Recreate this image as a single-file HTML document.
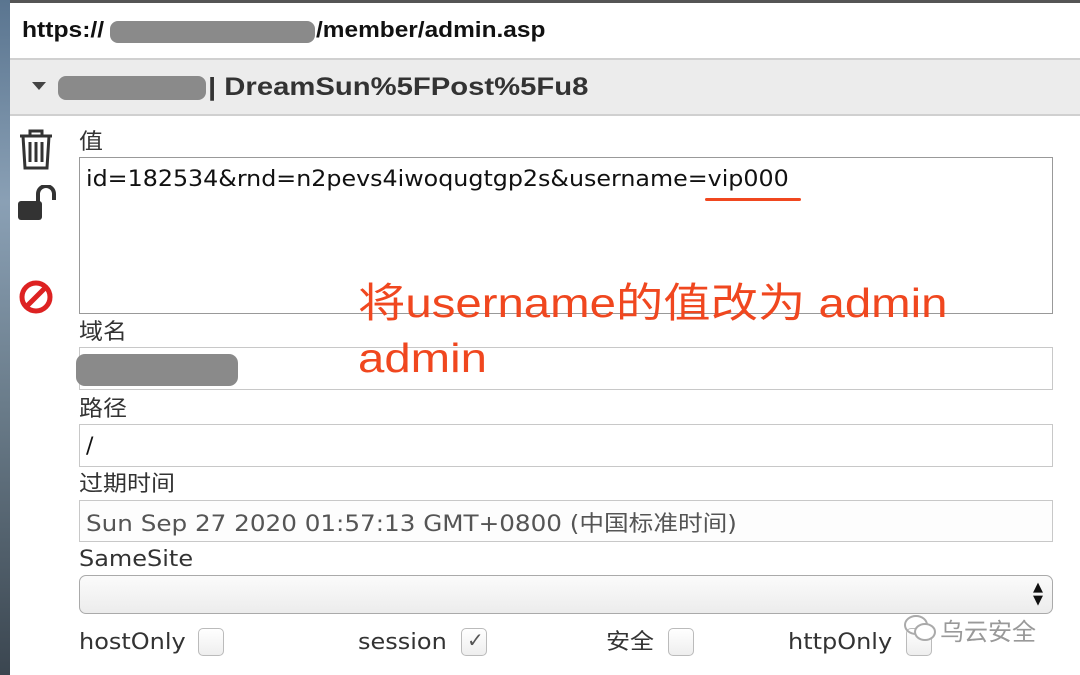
<!DOCTYPE html>
<html><head><meta charset="utf-8"><style>
body{margin:0;width:1080px;height:675px;overflow:hidden;background:#fff;font-family:"DejaVu Sans","Noto Sans CJK SC",sans-serif;position:relative;color:#222}
.a{position:absolute;white-space:nowrap}
.lbl{position:absolute;left:79px;font-size:22px;color:#333;line-height:26px;white-space:nowrap;transform:scaleX(1.09);transform-origin:0 50%;margin-top:2px}
.inp{position:absolute;left:79px;width:974px;border:1px solid #c8c8c8;background:#fff;box-sizing:border-box}
.cb{position:absolute;width:26px;height:28px;border:1px solid #bbb;border-radius:5px;background:linear-gradient(#fff,#eee);box-sizing:border-box}
.s{transform-origin:0 50%;display:inline-block}
</style></head><body>
<div class="a" style="left:0;top:0;width:10px;height:675px;background:linear-gradient(#5a7590,#8aa0b5 30%,#6a7c8a 60%,#3b4650)"></div>
<div class="a" style="left:10px;top:0;width:1070px;height:3px;background:#555"></div>
<div class="a" style="left:22px;top:17px;font-size:22px;font-weight:bold;color:#111;font-family:'Liberation Sans',sans-serif"><span class="s" style="transform:scaleX(1.12)">https://</span></div>
<div class="a" style="left:110px;top:21px;width:205px;height:22px;border-radius:8px;background:#8a8a8a"></div>
<div class="a" style="left:316px;top:17px;font-size:22px;font-weight:bold;color:#111;font-family:'Liberation Sans',sans-serif"><span class="s" style="transform:scaleX(1.11)">/member/admin.asp</span></div>
<div class="a" style="left:10px;top:58px;width:1070px;height:58px;background:#ececec;border-top:2px solid #d0d0d0;border-bottom:2px solid #d0d0d0;box-sizing:border-box"></div>
<div class="a" style="left:32px;top:82px;width:0;height:0;border-left:7px solid transparent;border-right:7px solid transparent;border-top:8px solid #444"></div>
<div class="a" style="left:58px;top:76px;width:148px;height:24px;border-radius:8px;background:#8a8a8a"></div>
<div class="a" style="left:208px;top:73px;font-size:25px;font-weight:bold;color:#333;font-family:'Liberation Sans',sans-serif"><span class="s" style="transform:scaleX(1.17)">| DreamSun%5FPost%5Fu8</span></div>
<svg class="a" style="left:18px;top:128px" width="36" height="42" viewBox="0 0 36 42"><path d="M2 8h32M12 8V3h12v5M5 8l2 32h22l2-32M12 14v20M18 14v20M24 14v20" fill="none" stroke="#333" stroke-width="3"/></svg>
<svg class="a" style="left:18px;top:185px" width="42" height="36" viewBox="0 0 42 36"><rect x="0" y="16" width="24" height="19" rx="3" fill="#333"/><path d="M20 18V9a8 8 0 0 1 16 0v6" fill="none" stroke="#333" stroke-width="4"/></svg>
<svg class="a" style="left:18px;top:279px" width="36" height="36" viewBox="0 0 36 36"><circle cx="18" cy="18" r="14" fill="none" stroke="#d22" stroke-width="5"/><path d="M8 28L28 8" stroke="#d22" stroke-width="5"/></svg>
<div class="lbl" style="top:128px">值</div>
<div class="inp" style="top:157px;height:157px;border-color:#999"></div>
<div class="a" style="left:86px;top:167px;font-size:22px;color:#111"><span class="s" style="transform:scaleX(1.08)">id=182534&amp;rnd=n2pevs4iwoqugtgp2s&amp;username=vip000</span></div>
<div class="a" style="left:705px;top:198px;width:96px;height:3px;border-radius:2px;background:#f0471f"></div>
<div class="lbl" style="top:318px">域名</div>
<div class="inp" style="top:347px;height:43px"></div>
<div class="a" style="left:76px;top:354px;width:162px;height:32px;border-radius:9px;background:#8a8a8a"></div>
<div class="lbl" style="top:395px">路径</div>
<div class="inp" style="top:424px;height:43px"></div>
<div class="a" style="left:86px;top:434px;font-size:22px;color:#111">/</div>
<div class="lbl" style="top:470px">过期时间</div>
<div class="inp" style="top:500px;height:42px;background:#fdfdfd"></div>
<div class="a" style="left:86px;top:506px;font-size:22px;color:#555"><span class="s" style="transform:scaleX(1.12)">Sun Sep 27 2020 01:57:13 GMT+0800 (中国标准时间)</span></div>
<div class="lbl" style="top:545px">SameSite</div>
<div class="inp" style="top:575px;height:39px;border-radius:7px;border-color:#aaa;background:linear-gradient(#fbfbfb,#ececec)"></div>
<div class="a" style="left:1033px;top:581px;font-size:13px;line-height:13px;color:#111">▲<br>▼</div>
<div class="lbl" style="top:628px">hostOnly</div><div class="cb" style="left:198px;top:628px"></div>
<div class="lbl" style="top:628px;left:358px">session</div><div class="cb" style="left:461px;top:628px"></div>
<div class="a" style="left:467px;top:628px;font-size:20px;color:#555">✓</div>
<div class="lbl" style="top:628px;left:606px">安全</div><div class="cb" style="left:668px;top:628px"></div>
<div class="lbl" style="top:628px;left:788px">httpOnly</div><div class="cb" style="left:906px;top:628px"></div>
<svg class="a" style="left:903px;top:613px" width="34" height="30" viewBox="0 0 34 30"><ellipse cx="13" cy="12" rx="11" ry="9" fill="none" stroke="#aaa" stroke-width="2"/><ellipse cx="22" cy="19" rx="10" ry="8" fill="#fff" stroke="#aaa" stroke-width="2"/></svg>
<div class="a" style="left:940px;top:612px;font-size:24px;color:#999;font-family:'Noto Sans CJK SC',sans-serif">乌云安全</div>
<div class="a" style="left:358px;top:276px;font-size:41px;line-height:55px;color:#f0471f;font-family:'Liberation Sans','Noto Sans CJK SC',sans-serif"><span class="s" style="transform:scaleX(1.155)">将username的值改为 admin</span><br><span class="s" style="transform:scaleX(1.155)">admin</span></div>
</body></html>
